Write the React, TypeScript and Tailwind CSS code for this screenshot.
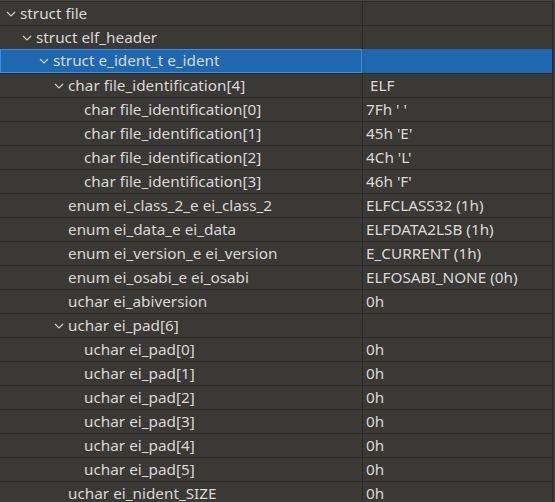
import React from 'react';

type Row = {
  label: string;
  value?: string;
  level: number;
  open?: boolean;
  selected?: boolean;
};

const rows: Row[] = [
  { label: 'struct file', level: 0, open: true },
  { label: 'struct elf_header', level: 1, open: true },
  { label: 'struct e_ident_t e_ident', level: 2, open: true, selected: true },
  { label: 'char file_identification[4]', value: ' ELF', level: 3, open: true },
  { label: 'char file_identification[0]', value: "7Fh ' '", level: 4 },
  { label: 'char file_identification[1]', value: "45h 'E'", level: 4 },
  { label: 'char file_identification[2]', value: "4Ch 'L'", level: 4 },
  { label: 'char file_identification[3]', value: "46h 'F'", level: 4 },
  { label: 'enum ei_class_2_e ei_class_2', value: 'ELFCLASS32 (1h)', level: 3 },
  { label: 'enum ei_data_e ei_data', value: 'ELFDATA2LSB (1h)', level: 3 },
  { label: 'enum ei_version_e ei_version', value: 'E_CURRENT (1h)', level: 3 },
  { label: 'enum ei_osabi_e ei_osabi', value: 'ELFOSABI_NONE (0h)', level: 3 },
  { label: 'uchar ei_abiversion', value: '0h', level: 3 },
  { label: 'uchar ei_pad[6]', level: 3, open: true },
  { label: 'uchar ei_pad[0]', value: '0h', level: 4 },
  { label: 'uchar ei_pad[1]', value: '0h', level: 4 },
  { label: 'uchar ei_pad[2]', value: '0h', level: 4 },
  { label: 'uchar ei_pad[3]', value: '0h', level: 4 },
  { label: 'uchar ei_pad[4]', value: '0h', level: 4 },
  { label: 'uchar ei_pad[5]', value: '0h', level: 4 },
  { label: 'uchar ei_nident_SIZE', value: '0h', level: 3 },
];

function Chevron() {
  return (
    <svg width="10" height="6" viewBox="0 0 10 6" className="shrink-0">
      <path d="M1 1 L5 5 L9 1" fill="none" stroke="#cfcfcf" strokeWidth="1.2" />
    </svg>
  );
}

export default function App() {
  return (
    <div
      className="w-[555px] h-[502px] overflow-hidden bg-[#3b3935] text-[15.3px] text-[#d8d8d8]"
      style={{ fontFamily: '"Noto Sans", "Open Sans", sans-serif' }}
    >
      <div className="w-[553px] border-t border-[#4a4844] border-r border-r-[#2a2926]">
        {rows.map((r, i) => (
          <div
            key={i}
            className={
              r.selected
                ? 'flex h-[24px] border-t border-[#1f67af] bg-[#1f67af]'
                : 'flex h-[24px] border-t border-[#2a2926]'
            }
          >
            <div
              className={
                r.selected
                  ? 'flex items-center w-[362px] shrink-0 whitespace-pre border border-[#3b8fe8] -mt-px h-[24px]'
                  : 'flex items-center w-[362px] shrink-0 whitespace-pre'
              }
            >
              <div className="flex items-center h-full" style={{ paddingLeft: 6 + r.level * 16 }}>
                <span className="w-[14px] flex items-center">{r.open ? <Chevron /> : null}</span>
                <span className="leading-none">{r.label}</span>
              </div>
            </div>
            <div
              className={
                r.selected
                  ? 'flex items-center flex-1 border-l border-[#2a5f96] pl-[3px] whitespace-pre'
                  : 'flex items-center flex-1 border-l border-[#2a2926] pl-[3px] whitespace-pre'
              }
            >
              <span className="leading-none">{r.value ?? ''}</span>
            </div>
          </div>
        ))}
      </div>
    </div>
  );
}
